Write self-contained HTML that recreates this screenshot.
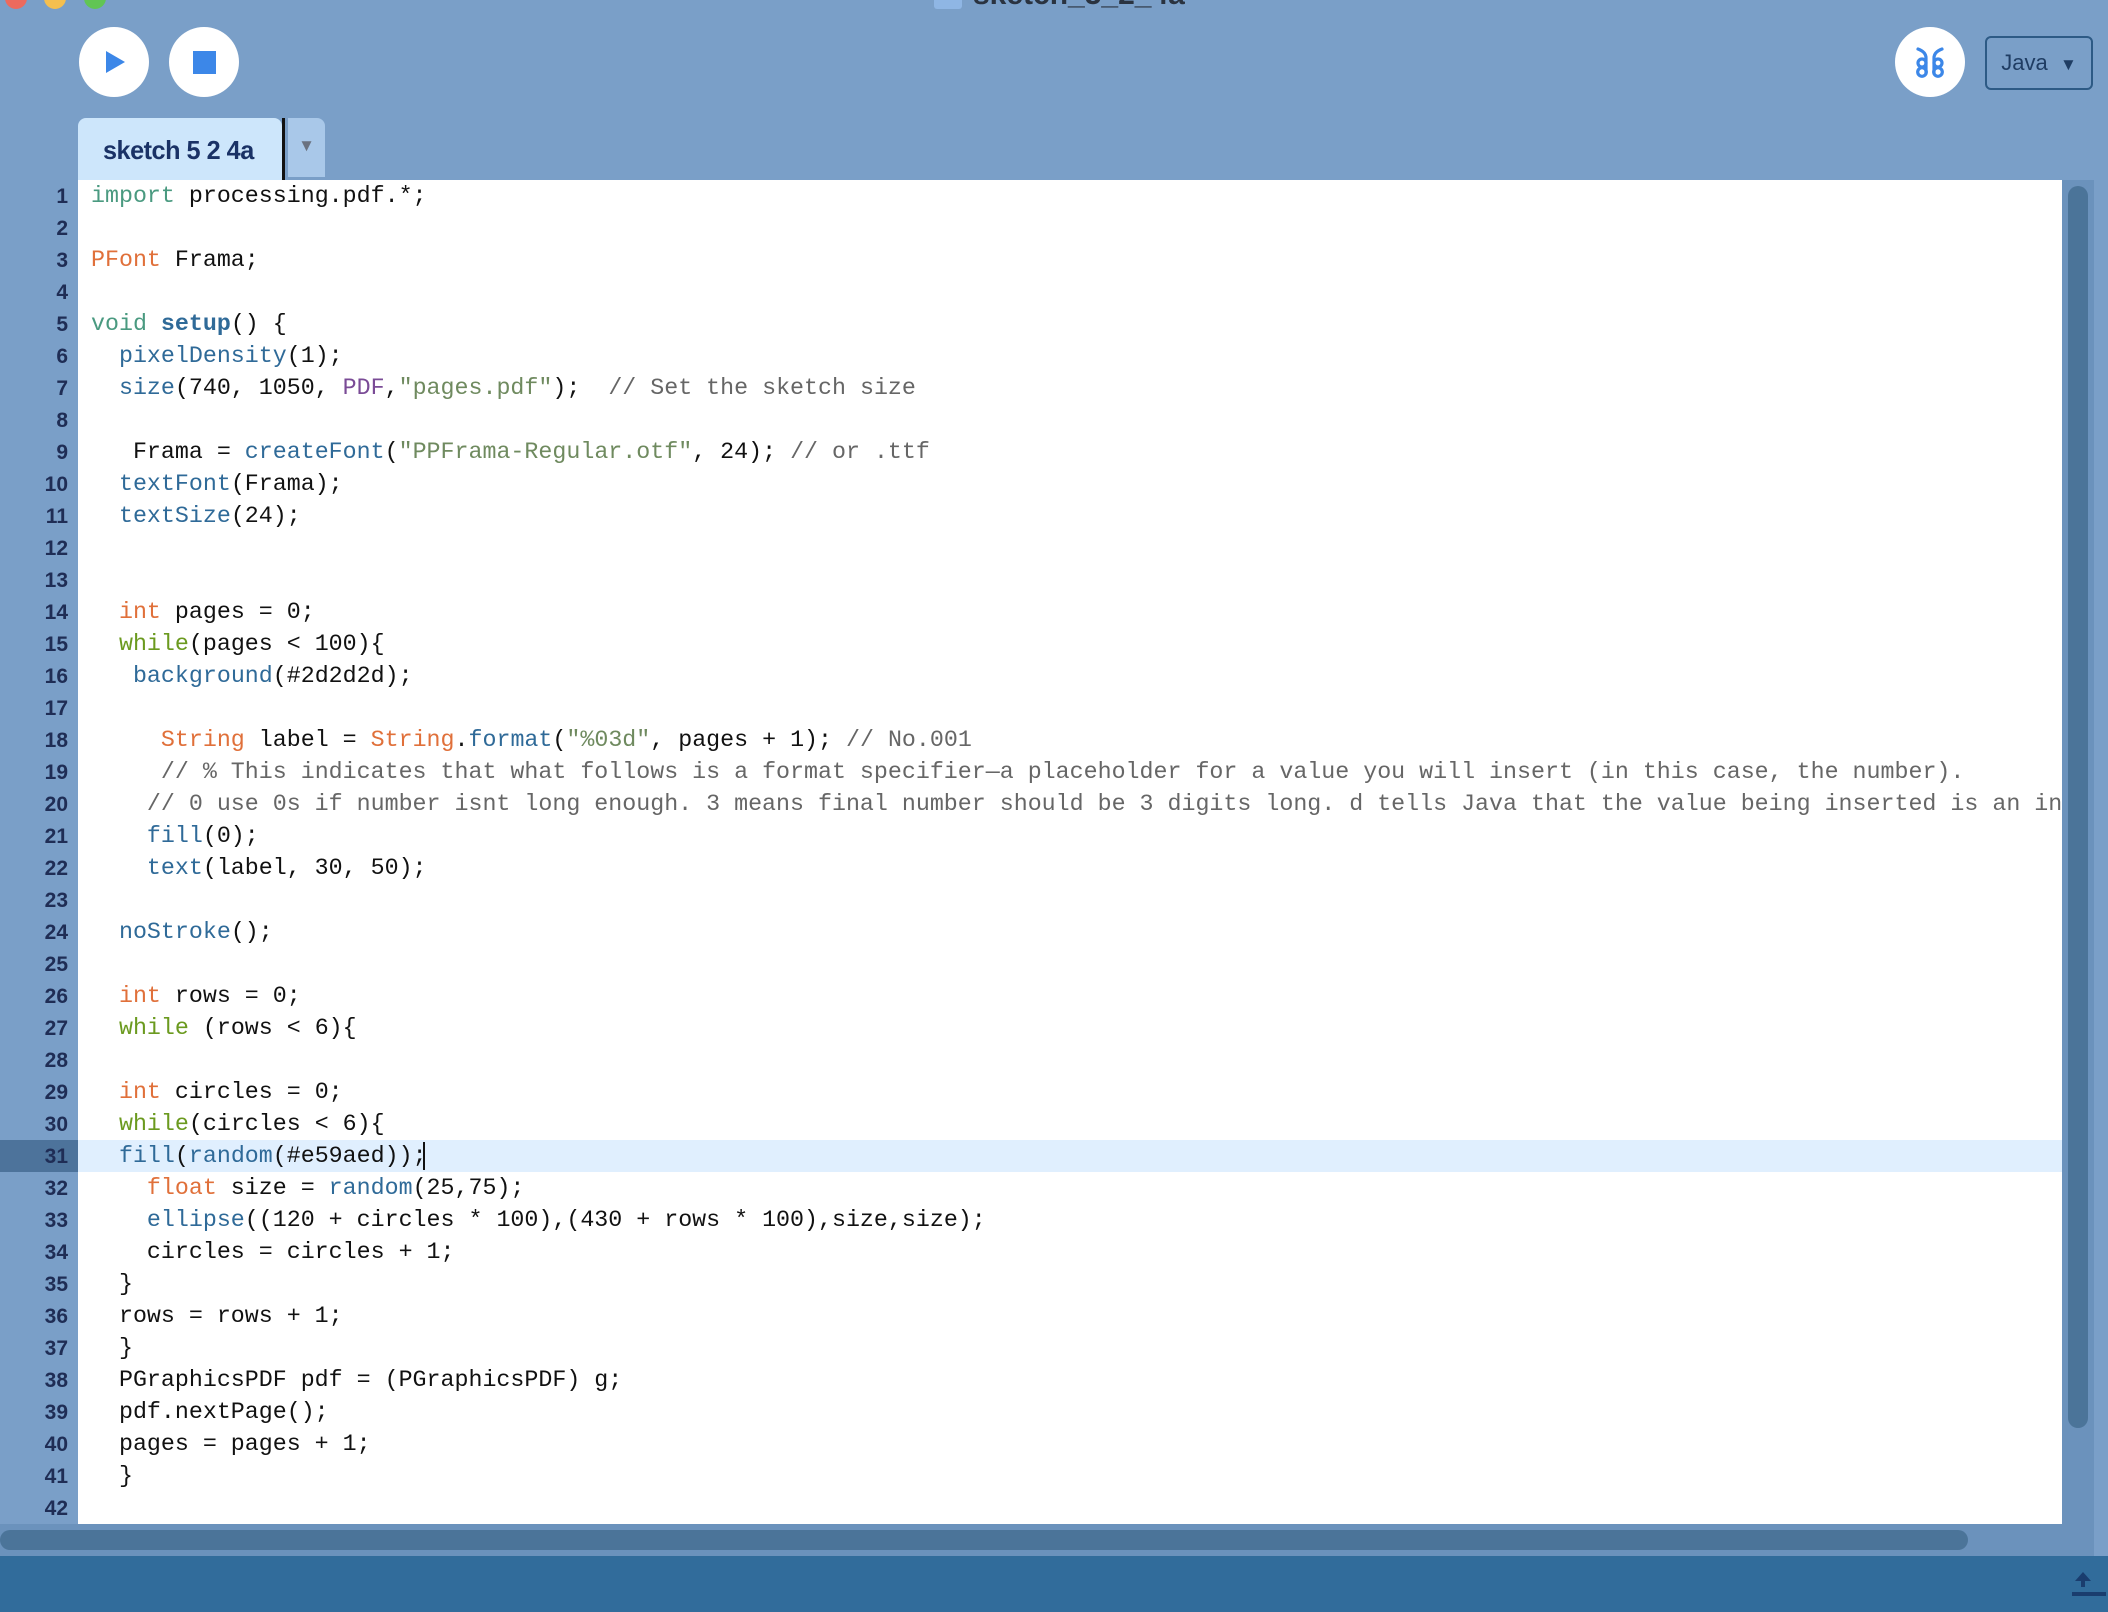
<!DOCTYPE html>
<html><head><meta charset="utf-8"><style>
html,body{margin:0;padding:0;}
body{width:2108px;height:1612px;background:#7a9fc8;position:relative;overflow:hidden;font-family:"Liberation Sans",sans-serif;}
.tl{position:absolute;width:22px;height:22px;border-radius:50%;top:-13px;}
.btn{position:absolute;width:70px;height:70px;border-radius:50%;background:#fff;top:27px;}
#editor{position:absolute;left:78px;top:180px;width:1984px;height:1344px;background:#fff;overflow:hidden;}
#gutter{position:absolute;left:0;top:180px;width:78px;height:1344px;}
.ln{position:absolute;width:78px;text-align:right;font-weight:bold;font-size:21px;color:#1f2d55;height:32px;line-height:33px;padding-right:10px;box-sizing:border-box;left:0;}
pre{margin:0;position:absolute;left:13px;top:0;font-family:"Liberation Mono",monospace;font-size:23.3px;line-height:32px;color:#111;white-space:pre;}
.k{color:#4a9a80}.t{color:#e0703a}.f{color:#2f6a98}.b{color:#2f6a98;font-weight:bold}.w{color:#6b9a1f}.p{color:#7a4b96}.s{color:#6f8a5f}.c{color:#666}
</style></head><body>
<div class="tl" style="left:5px;background:#ec6a5e"></div>
<div class="tl" style="left:44px;background:#f5bf4f"></div>
<div class="tl" style="left:84px;background:#61c554"></div>
<div style="position:absolute;left:934px;top:-18px;width:28px;height:27px;background:#8fb6e4;border-radius:3px"></div>
<div style="position:absolute;left:973px;top:-22px;font-size:30px;font-weight:bold;color:#2a3340">sketch_5_2_4a</div>

<div class="btn" style="left:79px"><svg width="70" height="70"><polygon points="27,24 27,46 46,35" fill="#3c87e8"/></svg></div>
<div class="btn" style="left:169px"><svg width="70" height="70"><rect x="24" y="24" width="23" height="23" fill="#3c87e8"/></svg></div>
<div class="btn" style="left:1895px"><svg width="70" height="70" fill="none" stroke="#3c87e8" stroke-width="3.2" stroke-linecap="round">
<path d="M23 22 Q31 25 31 31 L31 46"/><circle cx="27" cy="36" r="4"/><circle cx="27" cy="45" r="4.3"/>
<path d="M47 22 Q39 25 39 31 L39 46"/><circle cx="43" cy="36" r="4"/><circle cx="43" cy="45" r="4.3"/>
</svg></div>
<div style="position:absolute;left:1985px;top:36px;width:104px;height:50px;border:2px solid #2d5a85;border-radius:6px;color:#1f3d63;font-size:22px;line-height:50px;text-align:center">Java&nbsp; <span style="font-size:17px">▼</span></div>

<div style="position:absolute;left:78px;top:118px;width:204px;height:62px;background:#cde6fb;border-radius:8px 8px 0 0;"></div>
<div style="position:absolute;left:103px;top:118px;height:62px;color:#1a3266;font-size:26px;font-weight:bold;line-height:64px;letter-spacing:-0.5px;transform:scaleX(0.97);transform-origin:left">sketch 5 2 4a</div>
<div style="position:absolute;left:282px;top:118px;width:3px;height:62px;background:#111"></div>
<div style="position:absolute;left:288px;top:118px;width:37px;height:59px;background:#a9c8e9;border-radius:0 8px 0 0;color:#6b7280;font-size:17px;text-align:center;line-height:56px">▼</div>

<div style="position:absolute;left:0;top:1140px;width:78px;height:32px;background:#4d739b"></div>
<div id="gutter">
<div class="ln" style="top:0">1</div><div class="ln" style="top:32px">2</div><div class="ln" style="top:64px">3</div><div class="ln" style="top:96px">4</div><div class="ln" style="top:128px">5</div><div class="ln" style="top:160px">6</div><div class="ln" style="top:192px">7</div><div class="ln" style="top:224px">8</div><div class="ln" style="top:256px">9</div><div class="ln" style="top:288px">10</div><div class="ln" style="top:320px">11</div><div class="ln" style="top:352px">12</div><div class="ln" style="top:384px">13</div><div class="ln" style="top:416px">14</div><div class="ln" style="top:448px">15</div><div class="ln" style="top:480px">16</div><div class="ln" style="top:512px">17</div><div class="ln" style="top:544px">18</div><div class="ln" style="top:576px">19</div><div class="ln" style="top:608px">20</div><div class="ln" style="top:640px">21</div><div class="ln" style="top:672px">22</div><div class="ln" style="top:704px">23</div><div class="ln" style="top:736px">24</div><div class="ln" style="top:768px">25</div><div class="ln" style="top:800px">26</div><div class="ln" style="top:832px">27</div><div class="ln" style="top:864px">28</div><div class="ln" style="top:896px">29</div><div class="ln" style="top:928px">30</div><div class="ln" style="top:960px">31</div><div class="ln" style="top:992px">32</div><div class="ln" style="top:1024px">33</div><div class="ln" style="top:1056px">34</div><div class="ln" style="top:1088px">35</div><div class="ln" style="top:1120px">36</div><div class="ln" style="top:1152px">37</div><div class="ln" style="top:1184px">38</div><div class="ln" style="top:1216px">39</div><div class="ln" style="top:1248px">40</div><div class="ln" style="top:1280px">41</div><div class="ln" style="top:1312px">42</div>
</div>

<div id="editor">
<div style="position:absolute;left:0;top:960px;width:1984px;height:32px;background:#e0effe"></div>
<div style="position:absolute;left:345px;top:962px;width:2px;height:28px;background:#111"></div>
<pre><span class="k">import</span> processing.pdf.*;

<span class="t">PFont</span> Frama;

<span class="k">void</span> <span class="b">setup</span>() {
  <span class="f">pixelDensity</span>(1);
  <span class="f">size</span>(740, 1050, <span class="p">PDF</span>,<span class="s">"pages.pdf"</span>);  <span class="c">// Set the sketch size</span>

   Frama = <span class="f">createFont</span>(<span class="s">"PPFrama-Regular.otf"</span>, 24); <span class="c">// or .ttf</span>
  <span class="f">textFont</span>(Frama);
  <span class="f">textSize</span>(24);


  <span class="t">int</span> pages = 0;
  <span class="w">while</span>(pages &lt; 100){
   <span class="f">background</span>(#2d2d2d);

     <span class="t">String</span> label = <span class="t">String</span>.<span class="f">format</span>(<span class="s">"%03d"</span>, pages + 1); <span class="c">// No.001</span>
     <span class="c">// % This indicates that what follows is a format specifier—a placeholder for a value you will insert (in this case, the number).</span>
    <span class="c">// 0 use 0s if number isnt long enough. 3 means final number should be 3 digits long. d tells Java that the value being inserted is an integer</span>
    <span class="f">fill</span>(0);
    <span class="f">text</span>(label, 30, 50);

  <span class="f">noStroke</span>();

  <span class="t">int</span> rows = 0;
  <span class="w">while</span> (rows &lt; 6){

  <span class="t">int</span> circles = 0;
  <span class="w">while</span>(circles &lt; 6){
  <span class="f">fill</span>(<span class="f">random</span>(#e59aed));
    <span class="t">float</span> size = <span class="f">random</span>(25,75);
    <span class="f">ellipse</span>((120 + circles * 100),(430 + rows * 100),size,size);
    circles = circles + 1;
  }
  rows = rows + 1;
  }
  PGraphicsPDF pdf = (PGraphicsPDF) g;
  pdf.nextPage();
  pages = pages + 1;
  }
</pre>
</div>

<div style="position:absolute;left:2062px;top:180px;width:32px;height:1376px;background:#6b92bc"></div>
<div style="position:absolute;left:2068px;top:186px;width:20px;height:1242px;background:#4b7499;border-radius:10px"></div>
<div style="position:absolute;left:0;top:1524px;width:2062px;height:32px;background:#6b92bc"></div>
<div style="position:absolute;left:0;top:1530px;width:1968px;height:20px;background:#4b7499;border-radius:10px"></div>
<div style="position:absolute;left:0;top:1556px;width:2108px;height:56px;background:#316c9b"></div>
<svg style="position:absolute;left:2072px;top:1568px" width="36" height="30"><polygon points="11,4 3,13 9,13 9,19 13,19 13,13 19,13" fill="#1a3d6e"/><rect x="-2" y="24" width="36" height="4" fill="#1a3d6e"/></svg>
</body></html>
